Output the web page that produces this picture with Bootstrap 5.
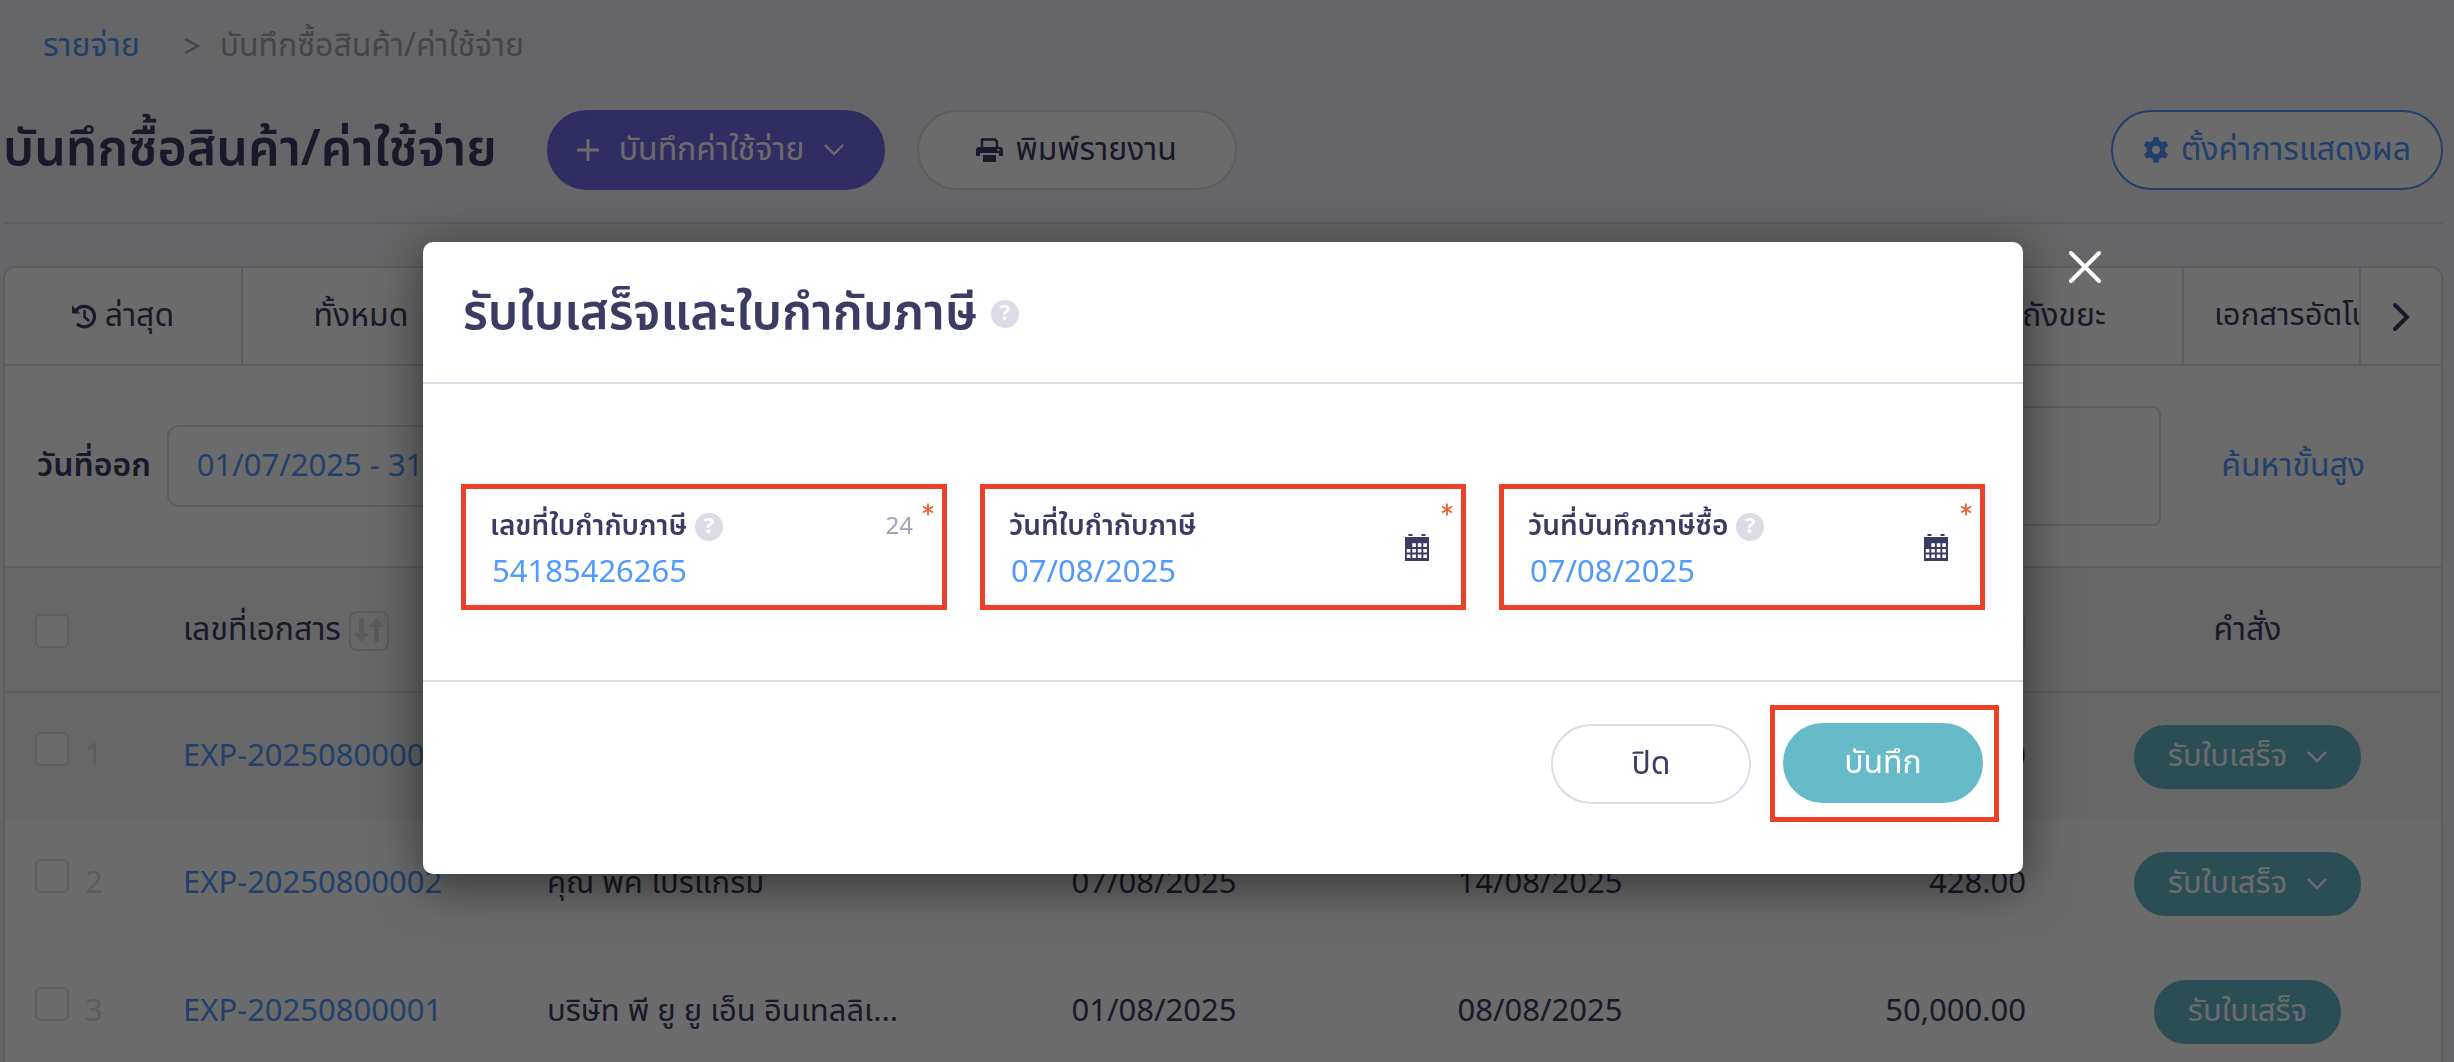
<!DOCTYPE html>
<html lang="th">
<head>
<meta charset="utf-8">
<meta name="viewport" content="width=device-width, initial-scale=1">
<title>บันทึกซื้อสินค้า/ค่าใช้จ่าย</title>
<link href="https://cdn.jsdelivr.net/npm/bootstrap@5.3.0/dist/css/bootstrap.min.css" rel="stylesheet">
<style>
:root { --ink:#3b3c64; --line:#dddbe8; --blue:#5199ff; --teal:#67bbc9; --purple:#706bea; --mark:#ec4128; }
body { font-family:"Noto Sans Thai","Noto Sans",sans-serif; font-size:32px; font-weight:400; line-height:48px; color:var(--ink); background:#f3f3f7; overflow:hidden; }
a { color:var(--blue); text-decoration:none; }
svg { flex:none; }
.page-wrap { padding:0 11px 0 3px; }
.crumbs { padding:22px 40px; gap:20px; }
.crumbs .here { color:#a3a2b3; }
.page-head { height:114px; padding-bottom:32px; border-bottom:2px solid var(--line); gap:32px; margin-top:18px; }
.page-head h1 { font-size:50px; font-weight:600; line-height:64px; margin:0 18px 0 0; }
.pill { height:80px; border-radius:40px; font-weight:400; line-height:48px; color:var(--ink); border:2px solid var(--line); background:#fff; padding:0 30px; display:inline-flex; align-items:center; justify-content:center; gap:12px; white-space:nowrap; }
.pill-purple { background:var(--purple); border-color:var(--purple); color:#fff; width:338px; gap:20px; justify-content:flex-start; padding:0 28px; }
.pill-print { width:320px; }
.pill-blue { color:var(--blue); border-color:var(--blue); width:332px; }
.pill-teal { background:var(--teal); border-color:var(--teal); color:#fff; }
.pill-row { height:64px; gap:20px; padding:0 32px; }
.panel { margin-top:42px; border:2px solid var(--line); border-radius:12px; background:#fff; overflow:hidden; }
.tabs-row { height:98px; border-bottom:2px solid var(--line); }
.tabs-row button { border:0; border-right:2px solid var(--line); background:none; color:inherit; padding:0 30px; overflow:hidden; white-space:nowrap; }
.tab-a { width:238px; }
.tab-cut { width:177px; text-align:left; font-size:31px; }
.tabs-row .tab-next { width:80px; border-right:0; }
.filters { height:202px; border-bottom:2px solid var(--line); padding:0 76px 0 32px; gap:16px; }
.filters label { font-weight:600; }
.box-input { height:82px; font-size:31px; border:2px solid var(--line); border-radius:12px; color:var(--blue); padding:0 28px; background:#fff; }
.box-search { height:120px; border-radius:8px; }
.advanced { margin-left:44px; }
.grid-table { table-layout:fixed; width:100%; margin:0; }
.grid-table th, .grid-table td { height:128px; padding:0 28px; font-weight:400; vertical-align:middle; white-space:nowrap; }
.grid-table th { height:124px; background:#f5f5f5; border-bottom:2px solid var(--line); }
.grid-table td { font-size:31px; }
.grid-table tr.hot td { background:#f5f5f5; }
.grid-table td:first-child { color:#dcdcdc; }
.grid-table .pill { font-size:31px; }
.tick { appearance:none; width:34px; height:34px; border:2px solid var(--line); border-radius:6px; background:#fff; margin:0 16px 0 2px; vertical-align:middle; }
.grid-table td .tick { margin-bottom:16px; }
.sorter { width:40px; height:40px; border:2px solid #d8d8d8; border-radius:8px; padding:0; background:none; color:#d8d8d8; display:inline-flex; align-items:center; justify-content:center; vertical-align:middle; }
.modal-backdrop.show { opacity:.58; }
.modal { padding-right:8px !important; }
.modal-dialog { max-width:1600px; margin-top:242px; }
.modal-content { border:0; border-radius:10px; background:#fff; color:var(--ink); box-shadow:0 10px 50px rgba(0,0,0,.55); }
.modal-header { height:142px; padding:4px 40px 0; border-bottom:2px solid var(--line); justify-content:flex-start; gap:14px; }
.modal-header h2 { font-size:49px; font-weight:600; line-height:64px; margin:0; }
.modal-body { padding:100px 38px 70px; display:grid; grid-template-columns:repeat(3,1fr); gap:33px; }
.modal-footer { padding:23px 24px 52px; border-top:2px solid var(--line); gap:19px; }
.modal-footer > * { margin:0; }
.modal-footer .pill { width:200px; }
.marked { border:5px solid var(--mark); }
.save-mark { padding:13px 11px 14px 8px; }
.field-box { height:126px; padding:14px 29px 14px 24px; position:relative; }
.field-box label { font-size:28px; font-weight:600; line-height:48px; }
.field-box input { border:0; padding:0 2px; width:320px; height:44px; font-size:31px; line-height:44px; color:var(--blue); background:none; display:block; }
.field-box .counter { font-size:24px; color:#a3a2b3; }
.star { position:absolute; right:8px; top:14px; }
.cal { position:absolute; right:32px; top:45px; }
.closer { position:absolute; left:100%; top:8px; margin-left:46px; border:0; background:none; padding:0; line-height:1; }
.q { border-radius:50%; width:28px; height:28px; background:var(--line); color:#fff; font-size:22px; font-weight:700; line-height:28px; text-align:center; flex:none; }
</style>
</head>
<body>
<svg class="d-none">
  <symbol id="i-down" viewBox="0 0 20 12"><path d="M1.500 1.500 10 10l8.500-8.500" fill="none" stroke="currentColor" stroke-width="2.400" stroke-linecap="round"/></symbol>
  <symbol id="i-sort" viewBox="0 0 32 28"><path d="M6 3q0-2 2-2h1q2 0 2 2v13h3.500q2 0 .7 1.500l-5.700 6.500q-1 1-2 0L1.800 17.500Q.500 16 2.500 16H6zM21 23q0 2 2 2h1q2 0 2-2V10h3.500q2 0 .7-1.500L24.500 2q-1-1-2 0l-5.700 6.500Q15.500 10 17.500 10H21z" fill="currentColor"/></symbol>
  <symbol id="i-cal" viewBox="0 0 24 27"><path d="M0 3h24v24H0zM3.500 0h4v2h-4zM16.500 0h4v2h-4z" fill="#3b3c64"/><path d="M7.300 9.300h3.600v3.600H7.300zm5.500 0h3.600v3.600h-3.600zm5.500 0h3.600v3.600h-3.600zM1.800 14.900h3.600v3.600H1.800zm5.500 0h3.600v3.600H7.300zm5.500 0h3.600v3.600h-3.600zm5.500 0h3.600v3.600h-3.600zM1.800 20.500h3.600v3.600H1.800zm5.500 0h3.600v3.600H7.300zm5.500 0h3.600v3.600h-3.600zm5.500 0h3.600v3.600h-3.600z" fill="#fff"/></symbol>
  <symbol id="i-star" viewBox="0 0 12 13"><path d="M6 .5v12M1 3.500l10 6M11 3.500l-10 6" stroke="#e8613c" stroke-width="1.800" fill="none"/></symbol>
</svg>

<div class="page-wrap">
  <nav class="crumbs d-flex align-items-center" aria-label="breadcrumb">
    <a href="#">รายจ่าย</a>
    <svg class="ms-4" width="16" height="18" viewBox="0 0 16 18"><path d="M1 2l13 7-13 7" fill="none" stroke="#a3a2b3" stroke-width="2.500"/></svg>
    <span class="here">บันทึกซื้อสินค้า/ค่าใช้จ่าย</span>
  </nav>
  <header class="page-head d-flex align-items-center">
    <h1>บันทึกซื้อสินค้า/ค่าใช้จ่าย</h1>
    <button class="pill pill-purple" type="button">
      <svg width="22" height="22" viewBox="0 0 22 22"><path d="M11 1v20M1 11h20" stroke="currentColor" stroke-width="3" stroke-linecap="round"/></svg>
      บันทึกค่าใช้จ่าย
      <svg width="20" height="12"><use href="#i-down"/></svg>
    </button>
    <button class="pill pill-print" type="button">
      <svg width="27" height="24" viewBox="0 0 27 24"><path d="M6 9V1.500h13L21 3.500V9" fill="none" stroke="currentColor" stroke-width="2.500"/><path d="M3 9h21q3 0 3 3v6h-4v-3H4v3H0v-6q0-3 3-3zM7 17h13v7H7z" fill="currentColor"/><circle cx="22.500" cy="12" r="1.200" fill="#fff"/></svg>
      พิมพ์รายงาน
    </button>
    <button class="pill pill-blue ms-auto" type="button">
      <svg width="26" height="26" viewBox="0 0 26 26"><path fill="currentColor" fill-rule="evenodd" d="M10.500 0h5l.8 3.800 2.600 1.500 3.700-1.200 2.500 4.300-2.900 2.600v3.700l2.900 2.600-2.500 4.300-3.700-1.200-2.600 1.500-.8 3.800h-5l-.8-3.800-2.600-1.500-3.700 1.200L.9 17.300l2.900-2.600V11L.9 8.400l2.500-4.300 3.700 1.200 2.600-1.500zM13 8.700a4.200 4.200 0 1 0 0 8.400 4.200 4.200 0 0 0 0-8.400z"/></svg>
      ตั้งค่าการแสดงผล
    </button>
  </header>

  <main class="panel">
    <div class="tabs-row d-flex">
      <button class="tab-a d-flex align-items-center justify-content-center gap-2" type="button">
        <svg width="25" height="25" viewBox="0 0 25 25"><path d="M4 6.500A10.300 10.300 0 1 1 6 20.800" fill="none" stroke="currentColor" stroke-width="3.200" stroke-linecap="round"/><path d="M0 1.500 8.500 9.500H1Q0 9.500 0 8.500z" fill="currentColor"/><path d="M12.500 7v6l4 3.500" fill="none" stroke="currentColor" stroke-width="2.500" stroke-linecap="round"/></svg>
        ล่าสุด
      </button>
      <button class="tab-a" type="button">ทั้งหมด</button>
      <button class="flex-fill" type="button"></button>
      <button class="tab-a" type="button">ถังขยะ</button>
      <button class="tab-cut" type="button">เอกสารอัตโนมัติ</button>
      <button class="tab-next" type="button" aria-label="ถัดไป"><svg width="18" height="30" viewBox="0 0 18 30"><path d="M3 3l12 12L3 27" fill="none" stroke="currentColor" stroke-width="4" stroke-linecap="round"/></svg></button>
    </div>
    <div class="filters d-flex align-items-center">
      <label for="issued">วันที่ออก</label>
      <input class="box-input" id="issued" value="01/07/2025 - 31/08/2025">
      <input class="box-input box-search flex-fill" aria-label="ค้นหา">
      <a class="advanced" href="#">ค้นหาขั้นสูง</a>
    </div>
    <table class="grid-table">
      <colgroup><col style="width:150px"><col style="width:364px"><col style="width:442px"><col style="width:386px"><col style="width:386px"><col style="width:321px"><col></colgroup>
      <thead>
        <tr>
          <th><input class="tick" type="checkbox" aria-label="เลือกทั้งหมด"></th>
          <th>เลขที่เอกสาร <button class="sorter" type="button" aria-label="เรียง"><svg width="32" height="28"><use href="#i-sort"/></svg></button></th>
          <th></th><th></th><th></th>
          <th class="text-end"><button class="sorter" type="button" aria-label="เรียง"><svg width="32" height="28"><use href="#i-sort"/></svg></button></th>
          <th class="text-center">คำสั่ง</th>
        </tr>
      </thead>
      <tbody>
        <tr class="hot">
          <td><input class="tick" id="r1" type="checkbox"><label for="r1">1</label></td>
          <td><a href="#">EXP-20250800003</a></td><td></td><td></td><td></td><td class="text-end">0.00</td>
          <td class="text-center"><button class="pill pill-teal pill-row" type="button">รับใบเสร็จ <svg width="20" height="12"><use href="#i-down"/></svg></button></td>
        </tr>
        <tr>
          <td><input class="tick" id="r2" type="checkbox"><label for="r2">2</label></td>
          <td><a href="#">EXP-20250800002</a></td><td>คุณ พีค โปรแกรม</td><td class="text-center">07/08/2025</td><td class="text-center">14/08/2025</td><td class="text-end">428.00</td>
          <td class="text-center"><button class="pill pill-teal pill-row" type="button">รับใบเสร็จ <svg width="20" height="12"><use href="#i-down"/></svg></button></td>
        </tr>
        <tr>
          <td><input class="tick" id="r3" type="checkbox"><label for="r3">3</label></td>
          <td><a href="#">EXP-20250800001</a></td><td>บริษัท พี ยู ยู เอ็น อินเทลลิเ...</td><td class="text-center">01/08/2025</td><td class="text-center">08/08/2025</td><td class="text-end">50,000.00</td>
          <td class="text-center"><button class="pill pill-teal pill-row" type="button">รับใบเสร็จ</button></td>
        </tr>
      </tbody>
    </table>
  </main>
</div>

<div class="modal-backdrop show"></div>
<div class="modal show d-block" role="dialog" aria-modal="true" aria-labelledby="dlg">
  <div class="modal-dialog">
    <div class="modal-content">
      <button class="closer" type="button" aria-label="ปิด"><svg width="32" height="32" viewBox="0 0 32 32"><path d="M2 2l28 28M30 2 2 30" stroke="#fff" stroke-width="4" stroke-linecap="round"/></svg></button>
      <div class="modal-header"><h2 id="dlg">รับใบเสร็จและใบกำกับภาษี</h2><span class="q">?</span></div>
      <div class="modal-body">
        <div class="field-box marked">
          <div class="d-flex align-items-center gap-2"><label for="taxno">เลขที่ใบกำกับภาษี</label><span class="q">?</span><span class="counter ms-auto">24</span></div>
          <input id="taxno" value="54185426265">
          <svg class="star" width="12" height="13"><use href="#i-star"/></svg>
        </div>
        <div class="field-box marked">
          <div class="d-flex align-items-center gap-2"><label for="taxdate">วันที่ใบกำกับภาษี</label></div>
          <input id="taxdate" value="07/08/2025">
          <svg class="star" width="12" height="13"><use href="#i-star"/></svg>
          <svg class="cal" width="24" height="27"><use href="#i-cal"/></svg>
        </div>
        <div class="field-box marked">
          <div class="d-flex align-items-center gap-2"><label for="recdate">วันที่บันทึกภาษีซื้อ</label><span class="q">?</span></div>
          <input id="recdate" value="07/08/2025">
          <svg class="star" width="12" height="13"><use href="#i-star"/></svg>
          <svg class="cal" width="24" height="27"><use href="#i-cal"/></svg>
        </div>
      </div>
      <div class="modal-footer align-items-center">
        <button class="pill" type="button">ปิด</button>
        <div class="save-mark marked d-flex"><button class="pill pill-teal" type="button">บันทึก</button></div>
      </div>
    </div>
  </div>
</div>
<script src="https://cdn.jsdelivr.net/npm/bootstrap@5.3.0/dist/js/bootstrap.bundle.min.js"></script>
</body>
</html>
